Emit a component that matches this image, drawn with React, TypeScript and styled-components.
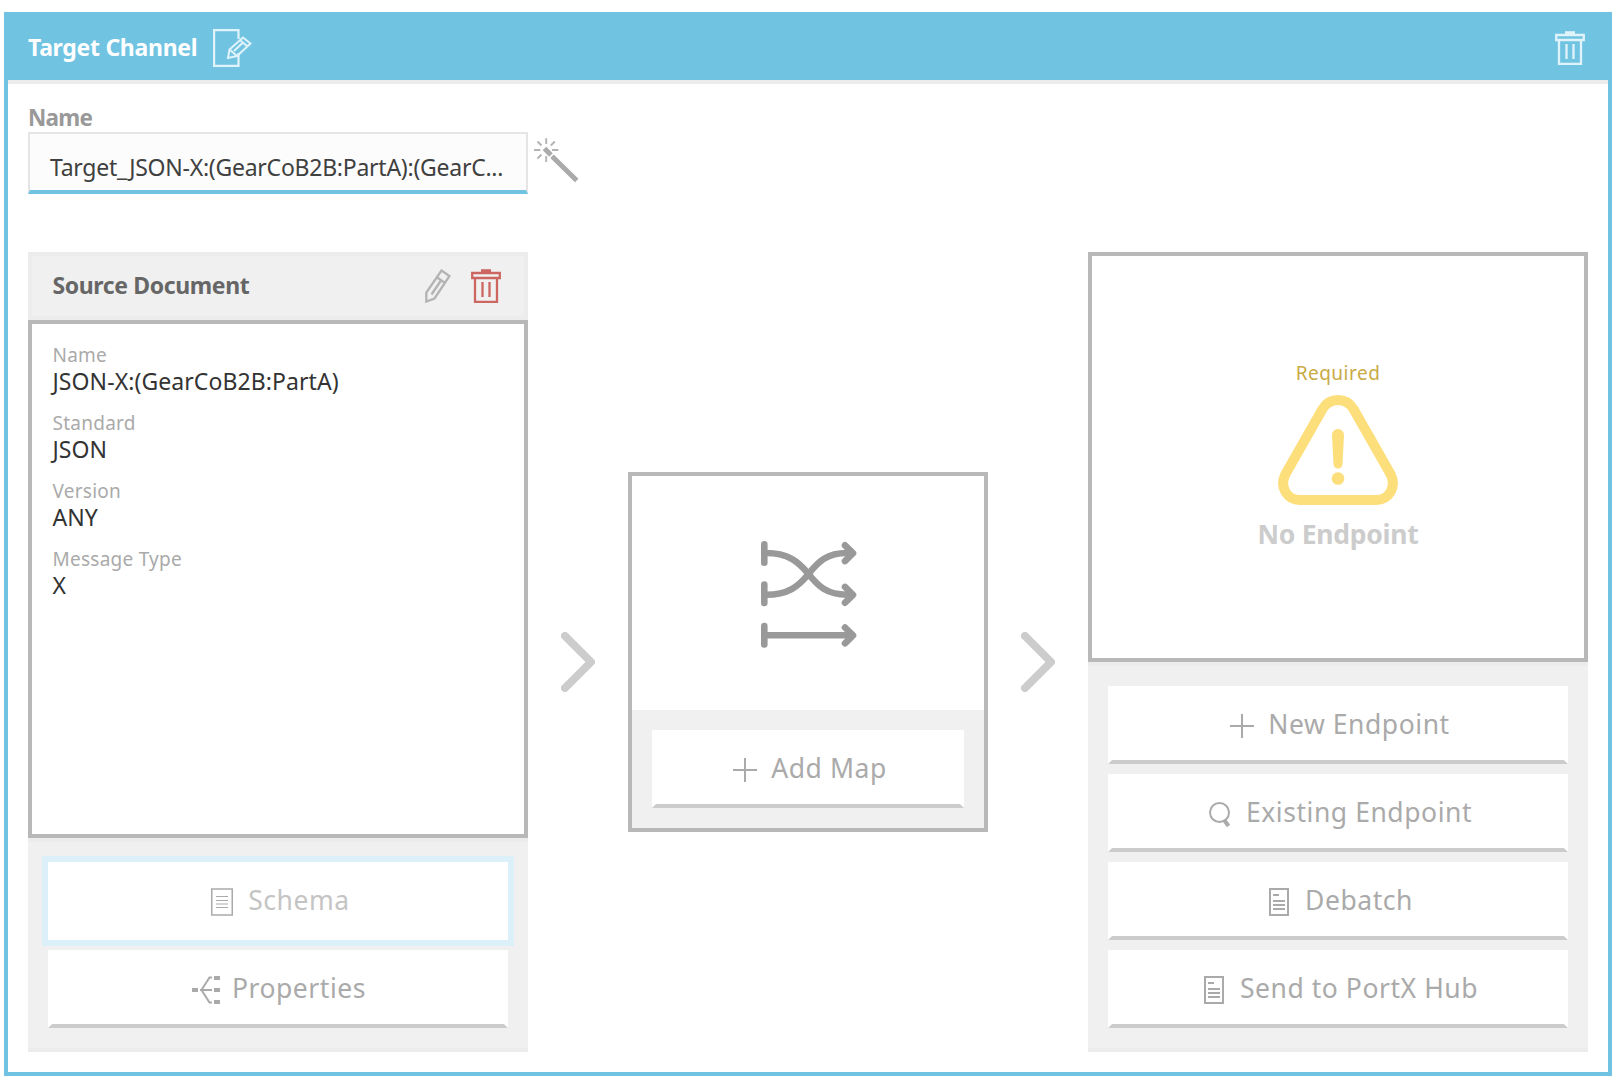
import React from "react";
import styled, { createGlobalStyle } from "styled-components";

const GlobalStyle = createGlobalStyle`
  * { box-sizing: border-box; }
  body { margin: 0; background: #fff; font-family: "Noto Sans", "Open Sans", sans-serif; }
`;

const Frame = styled.main`
  width: 1608px;
  height: 1064px;
  margin: 12px 0 0 4px;
  border: 4px solid #70c4e2;
  background: #fff;
`;
const Header = styled.header`
  display: flex;
  align-items: center;
  justify-content: space-between;
  height: 64px;
  padding: 0 23px 0 20px;
  background: #70c4e2;
`;
const HeaderLeft = styled.div`
  display: flex;
  align-items: center;
  gap: 16px;
`;
const HeaderTitle = styled.h1`
  margin: 0;
  padding-bottom: 2px;
  color: #fff;
  font-size: 23px;
  line-height: 32px;
  font-weight: 700;
  letter-spacing: -0.3px;
  white-space: nowrap;
`;
const Content = styled.div`
  border-top: 4px solid #ececec;
  padding: 20px;
`;
const NameLabel = styled.label`
  display: block;
  height: 28px;
  color: #999;
  font-size: 22.5px;
  font-weight: 700;
  line-height: 28px;
  letter-spacing: -0.75px;
`;
const NameRow = styled.div`
  display: flex;
  align-items: flex-start;
  gap: 6px;
`;
const NameField = styled.div`
  width: 500px;
  height: 62px;
  padding: 9px 20px 0 20px;
  border: 2px solid #e5e5e5;
  border-bottom: 4px solid #70c4e2;
  background: #fcfcfc;
  color: #404040;
  font-size: 23px;
  line-height: 48px;
  letter-spacing: -0.25px;
  white-space: nowrap;
`;
const WandSlot = styled.div`
  padding-top: 5px;
  line-height: 0;
`;
const Flow = styled.div`
  display: flex;
  height: 800px;
  margin-top: 58px;
`;
const Column = styled.section`
  display: flex;
  flex-direction: column;
  width: 500px;
`;
const ColumnHeader = styled.div`
  display: flex;
  align-items: center;
  height: 68px;
  padding: 0 23px 0 20px;
  border: 4px solid #ececec;
  background: #f0f0f0;
`;
const ColumnTitle = styled.h2`
  flex: 1;
  margin: 0;
  padding: 0 0 2px 0.5px;
  color: #666;
  font-size: 23px;
  line-height: 32px;
  font-weight: 700;
  letter-spacing: -0.38px;
`;
const HeaderIcons = styled.div`
  display: flex;
  gap: 20px;
  line-height: 0;
`;
const DocumentBody = styled.dl`
  flex: 1;
  margin: 0;
  padding: 17px 20px 0 20.5px;
  border: 4px solid #b8b8b8;
`;
const Field = styled.div`
  height: 68px;
`;
const FieldLabel = styled.dt`
  color: #aaa;
  font-size: 19px;
  line-height: 28px;
  letter-spacing: 0.25px;
`;
const FieldValue = styled.dd`
  margin: 0;
  color: #333;
  font-size: 23px;
  line-height: 24px;
  letter-spacing: 0.08px;
`;
const Actions = styled.div`
  display: flex;
  flex-direction: column;
  gap: 10px;
  padding: 20px;
  border: solid #ececec;
  border-width: 4px 0;
  background: #f0f0f0;
`;
const ActionButton = styled.button<{ $focused?: boolean }>`
  display: flex;
  align-items: center;
  justify-content: center;
  gap: 12px;
  width: 100%;
  height: 78px;
  padding: 0 0 0 2px;
  border: 4px solid #fff;
  border-bottom-color: ${(p) => (p.$focused ? "#fff" : "#ccc")};
  background: #fff;
  box-shadow: ${(p) => (p.$focused ? "0 0 0 6px #dbf0f8" : "none")};
  color: ${(p) => (p.$focused ? "#c4c4c4" : "#aaa")};
  font-family: inherit;
`;
const ActionText = styled.span`
  padding-bottom: 2px;
  font-size: 26.5px;
  line-height: 36px;
  letter-spacing: 0.55px;
  white-space: nowrap;
`;
const IconSlot = styled.span`
  display: flex;
  justify-content: center;
  width: 28px;
  padding-top: 2px;
  color: #aaa;
`;
const ArrowGap = styled.div`
  display: flex;
  align-items: center;
  justify-content: center;
  width: 100px;
  padding-top: 20px;
`;
const MapCard = styled.section`
  display: flex;
  flex-direction: column;
  align-self: center;
  width: 360px;
  height: 360px;
  border: 4px solid #b8b8b8;
`;
const MapPreview = styled.div`
  display: flex;
  flex: 1;
  align-items: center;
  justify-content: center;
  padding: 2px 0 0 1px;
`;
const MapActions = styled.div`
  padding: 20px;
  background: #f0f0f0;
`;
const EndpointBody = styled.div`
  display: flex;
  flex: 1;
  flex-direction: column;
  align-items: center;
  padding-top: 102px;
  border: 4px solid #b8b8b8;
`;
const Required = styled.div`
  color: #c9aa45;
  font-size: 19px;
  line-height: 30px;
  letter-spacing: 0.5px;
`;
const WarningSlot = styled.div`
  margin-top: 7px;
  line-height: 0;
`;
const EndpointTitle = styled.div`
  margin-top: 11px;
  color: #ccc;
  font-size: 26.5px;
  font-weight: 700;
  line-height: 36px;
  letter-spacing: -0.25px;
`;

const EditIcon = () => (
  <svg width="39" height="38" viewBox="0 0 39 38" fill="none" stroke="#e0f3fa" strokeWidth="2.2">
    <path d="M25.500 10V1.100H1.100v35.800h24.400V24" />
    <path d="M15 29l1.500-8.500L30 8.500l7.500 6L24 27zM16.500 20.500L24 27M27 11l7.500 6.500M21 22l8.500-8" strokeWidth="2" />
  </svg>
);
const TrashIcon = ({ color }: { color: string }) => (
  <svg width="30" height="34" viewBox="0 0 30 34" fill="none" stroke={color} strokeWidth="2.3">
    <path d="M1.200 4h27.600v5H1.200zM4 9v23.800h22V9" />
    <path d="M10 1.800h10" strokeWidth="3.200" />
    <path d="M11.500 13v15M18.500 13v15" />
  </svg>
);
const PencilIcon = () => (
  <svg width="26" height="34" viewBox="0 0 26 34" fill="none" stroke="#b3b3b3" strokeWidth="2.3">
    <path d="M16.500 1.500l8 5.500L9.500 29.500l-8.200 3V23.500zM12.200 8.500l7.800 5.500" />
    <path d="M6.500 25.500L16 11.500" />
  </svg>
);
const WandIcon = () => (
  <svg width="46" height="47" viewBox="0 0 46 47" fill="none" stroke="#aaa">
    <path d="M10.500 11.500l6.500 6.500M18 19.300L42.700 43.500" strokeWidth="5" />
    <path d="M12.200 1.300V7M12.200 19v6M0 13h6.300M18 13h6.300M3.500 4.500l4 4M20.800 4.500l-4 4M3.500 21.500l4-4" stroke="#b4b4b4" strokeWidth="1.900" />
  </svg>
);
const ChevronIcon = () => (
  <svg width="34" height="60" viewBox="0 0 34 60" fill="none" stroke="#ccc" strokeWidth="8" strokeLinecap="round" strokeLinejoin="round">
    <path d="M4 4l26 26L4 56" />
  </svg>
);
const MapIcon = () => (
  <svg width="96" height="107" viewBox="0 0 96 107" fill="none" stroke="#999" strokeWidth="6.600" strokeLinecap="round" strokeLinejoin="round">
    <path d="M3.300 3.300v18.400M3.300 43.600V62M3.300 85v18.400" />
    <path d="M5 12C27 12 37.500 20.500 47.500 33S66 53.700 86 53.700M5 53.700C27 53.700 37.500 45.500 47.500 33S66 12 86 12M5 94.300h84" />
    <path d="M84 4.300l8 7.900-8 7.900M84 45.900l8 7.900-8 7.900M84 86.500l8 7.900-8 7.900" />
  </svg>
);
const WarningIcon = () => (
  <svg width="120" height="110" viewBox="0 0 120 110" fill="none">
    <path d="M44.500 14Q50 5 60 5T75.500 14L112.500 79C119 92 111 105 98 105H22C9 105 1 92 7.500 79Z" stroke="#fcde7a" strokeWidth="10" />
    <path d="M54 40a6 6 0 0 1 12 0l-1.500 29a4.500 4.500 0 0 1-9 0z" fill="#fcde7a" />
    <circle cx="60" cy="83.500" r="6.300" fill="#fcde7a" />
  </svg>
);
const PlusIcon = () => (
  <svg width="24" height="24" viewBox="0 0 24 24" stroke="currentColor" strokeWidth="2">
    <path d="M12 0v24M0 12h24" />
  </svg>
);
const SearchIcon = () => (
  <svg width="22" height="25" viewBox="0 0 22 25" fill="none" stroke="currentColor">
    <circle cx="10.500" cy="10.500" r="9.500" strokeWidth="2" />
    <path d="M15.500 18.500l4 5.500" strokeWidth="4" />
  </svg>
);
const SchemaIcon = () => (
  <svg width="22" height="28" viewBox="0 0 22 28" fill="none" stroke="currentColor">
    <path d="M.75 1h20.500v26H.75z" strokeWidth="1.500" />
    <path d="M5 8.500h12M5 12.500h12M5 16h12M5 19.500h12" strokeWidth="1.200" />
  </svg>
);
const PageIcon = () => (
  <svg width="20" height="28" viewBox="0 0 20 28" fill="none" stroke="currentColor" strokeWidth="2">
    <path d="M1 1h18v26H1zM4 7h6M4 13h12M4 17h12M4 21h12" />
  </svg>
);
const PropertiesIcon = () => (
  <svg width="28" height="28" viewBox="0 0 28 28" fill="none" stroke="currentColor">
    <path d="M8 14h12M20 1.500h-2.500L9.500 14l8 12.500H20" strokeWidth="2" />
    <path d="M0 14h6M22 2h6M22 14h6M22 26h6" strokeWidth="4" />
  </svg>
);

const fields = [
  ["Name", "JSON-X:(GearCoB2B:PartA)"],
  ["Standard", "JSON"],
  ["Version", "ANY"],
  ["Message Type", "X"],
];

const endpointActions = [
  { label: "New Endpoint", Icon: PlusIcon },
  { label: "Existing Endpoint", Icon: SearchIcon },
  { label: "Debatch", Icon: PageIcon },
  { label: "Send to PortX Hub", Icon: PageIcon },
];

type ActionProps = { label: string; Icon: () => React.JSX.Element; focused?: boolean };
const Action = ({ label, Icon, focused }: ActionProps) => (
  <ActionButton type="button" $focused={focused}>
    <IconSlot><Icon /></IconSlot>
    <ActionText>{label}</ActionText>
  </ActionButton>
);

export default function App() {
  return (
    <>
      <GlobalStyle />
      <Frame>
        <Header>
          <HeaderLeft>
            <HeaderTitle>Target Channel</HeaderTitle>
            <EditIcon />
          </HeaderLeft>
          <TrashIcon color="#e0f3fa" />
        </Header>
        <Content>
          <NameLabel>Name</NameLabel>
          <NameRow>
            <NameField>Target_JSON-X:(GearCoB2B:PartA):(GearC...</NameField>
            <WandSlot><WandIcon /></WandSlot>
          </NameRow>
          <Flow>
            <Column>
              <ColumnHeader>
                <ColumnTitle>Source Document</ColumnTitle>
                <HeaderIcons>
                  <PencilIcon />
                  <TrashIcon color="#cc6660" />
                </HeaderIcons>
              </ColumnHeader>
              <DocumentBody>
                {fields.map(([label, value]) => (
                  <Field key={label}>
                    <FieldLabel>{label}</FieldLabel>
                    <FieldValue>{value}</FieldValue>
                  </Field>
                ))}
              </DocumentBody>
              <Actions>
                <Action label="Schema" Icon={SchemaIcon} focused />
                <Action label="Properties" Icon={PropertiesIcon} />
              </Actions>
            </Column>
            <ArrowGap><ChevronIcon /></ArrowGap>
            <MapCard>
              <MapPreview><MapIcon /></MapPreview>
              <MapActions>
                <Action label="Add Map" Icon={PlusIcon} />
              </MapActions>
            </MapCard>
            <ArrowGap><ChevronIcon /></ArrowGap>
            <Column>
              <EndpointBody>
                <Required>Required</Required>
                <WarningSlot><WarningIcon /></WarningSlot>
                <EndpointTitle>No Endpoint</EndpointTitle>
              </EndpointBody>
              <Actions>
                {endpointActions.map((action) => (
                  <Action key={action.label} {...action} />
                ))}
              </Actions>
            </Column>
          </Flow>
        </Content>
      </Frame>
    </>
  );
}
